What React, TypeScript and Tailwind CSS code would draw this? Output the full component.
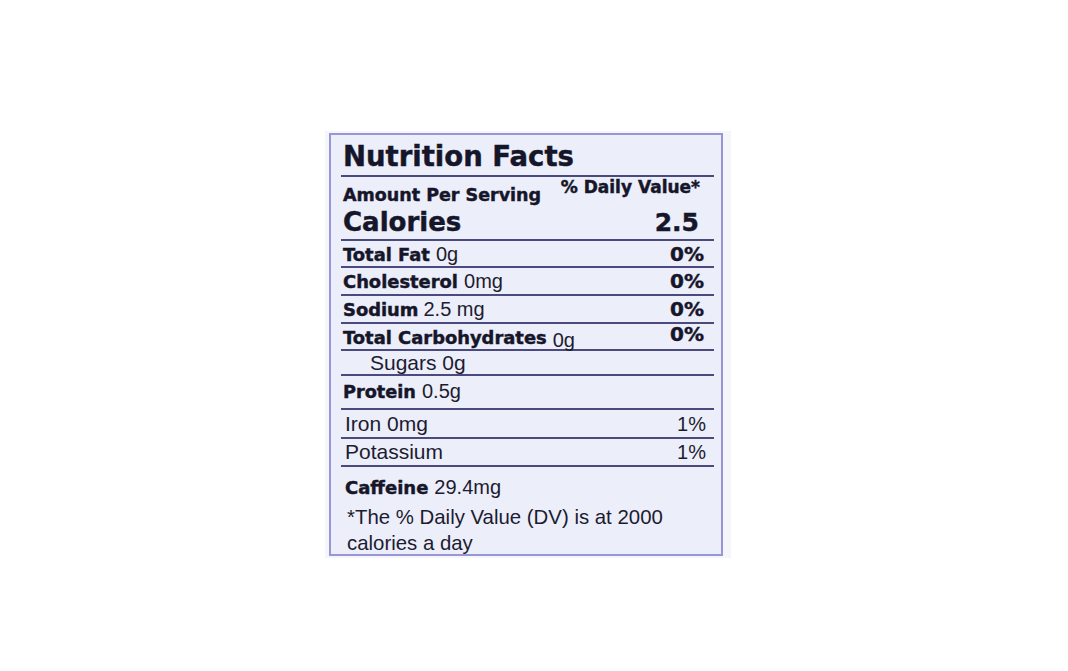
import React from "react";

const B =
  "font-['DejaVu_Sans',sans-serif] font-bold text-[#16162a] [-webkit-text-stroke:0.45px_#16162a]";
const R = "font-['Liberation_Sans',Arial,sans-serif] text-[#1c1c30]";
const LINE = "border-b-2 border-[#4a4a7e]";

function Row({
  h,
  left,
  right,
  extra = "",
}: {
  h: string;
  left: React.ReactNode;
  right?: React.ReactNode;
  extra?: string;
}) {
  return (
    <div className={`${h} ${LINE} flex items-center justify-between pl-[2px] pr-[10px] ${extra}`}>
      <div className="flex items-baseline whitespace-nowrap">{left}</div>
      {right !== undefined && <div className="whitespace-nowrap">{right}</div>}
    </div>
  );
}

export default function App() {
  return (
    <div className="w-[1068px] h-[671px] bg-white overflow-hidden">
      <div className="pt-[131px] pl-[325px]">
        <div className="w-[406px] h-[427px] bg-[#f5f6fa] pt-[2px] pl-[4px]">
          <div className="w-[394px] h-[423px] border-2 border-[#9896d6] bg-[#eceefa] pl-[10px] pr-[7px]">
            {/* Title */}
            <div className={`h-[42px] ${LINE} flex items-center pl-[2px] pt-[3px]`}>
              <span className={`${B} text-[27.5px] leading-none`}>Nutrition Facts</span>
            </div>
            {/* Amount / Calories */}
            <div className={`h-[64px] ${LINE} flex flex-col`}>
              <div className="h-[28px] flex justify-between pl-[2px] pr-[14px]">
                <span className={`${B} text-[17.5px] leading-none self-end mb-[1px]`}>Amount Per Serving</span>
                <span className={`${B} text-[17px] leading-none self-start mt-[2px]`}>% Daily Value*</span>
              </div>
              <div className="flex-1 flex items-center justify-between pl-[2px] pr-[15px]">
                <span className={`${B} text-[26px] leading-none`}>Calories</span>
                <span className={`${B} text-[25px] leading-none`}>2.5</span>
              </div>
            </div>
            <Row
              h="h-[27px]"
              left={
                <>
                  <span className={`${B} text-[17.9px]`}>Total Fat</span>
                  <span className={`${R} text-[20px] ml-[6px]`}>0g</span>
                </>
              }
              right={<span className={`${B} text-[20px]`}>0%</span>}
            />
            <Row
              h="h-[28px]"
              left={
                <>
                  <span className={`${B} text-[17.9px]`}>Cholesterol</span>
                  <span className={`${R} text-[20px] ml-[6px]`}>0mg</span>
                </>
              }
              right={<span className={`${B} text-[20px]`}>0%</span>}
            />
            <Row
              h="h-[28px]"
              left={
                <>
                  <span className={`${B} text-[17.9px]`}>Sodium</span>
                  <span className={`${R} text-[20px] ml-[5px]`}>2.5 mg</span>
                </>
              }
              right={<span className={`${B} text-[20px]`}>0%</span>}
            />
            <Row
              h="h-[27px]"
              left={
                <>
                  <span className={`${B} text-[17.9px]`}>Total Carbohydrates</span>
                  <span className={`${R} text-[20px] ml-[6px] translate-y-[3px]`}>0g</span>
                </>
              }
              right={<span className={`${B} text-[20px] relative -top-[3px]`}>0%</span>}
            />
            <Row
              h="h-[25px]"
              left={<span className={`${R} text-[21px] ml-[27px]`}>Sugars 0g</span>}
            />
            <Row
              h="h-[34px]"
              extra="!items-start pt-0"
              left={
                <>
                  <span className={`${B} text-[17.7px]`}>Protein</span>
                  <span className={`${R} text-[20px] ml-[6px]`}>0.5g</span>
                </>
              }
            />
            <Row
              h="h-[29px]"
              left={<span className={`${R} text-[21px] ml-[2px]`}>Iron 0mg</span>}
              right={<span className={`${R} text-[20px] mr-[-2px]`}>1%</span>}
            />
            <Row
              h="h-[28px]"
              left={<span className={`${R} text-[21px] ml-[2px]`}>Potassium</span>}
              right={<span className={`${R} text-[20px] mr-[-2px]`}>1%</span>}
            />
            <div className="pl-[4px] pt-[7px]">
              <div className="flex items-baseline h-[26px] leading-[26px]">
                <span className={`${B} text-[18px]`}>Caffeine</span>
                <span className={`${R} text-[20px] ml-[6px]`}>29.4mg</span>
              </div>
              <div className={`${R} text-[20.4px] leading-[26px] mt-[4px] ml-[2px]`}>
                *The % Daily Value (DV) is at 2000
                <br />
                calories a day
              </div>
            </div>
          </div>
        </div>
      </div>
    </div>
  );
}
